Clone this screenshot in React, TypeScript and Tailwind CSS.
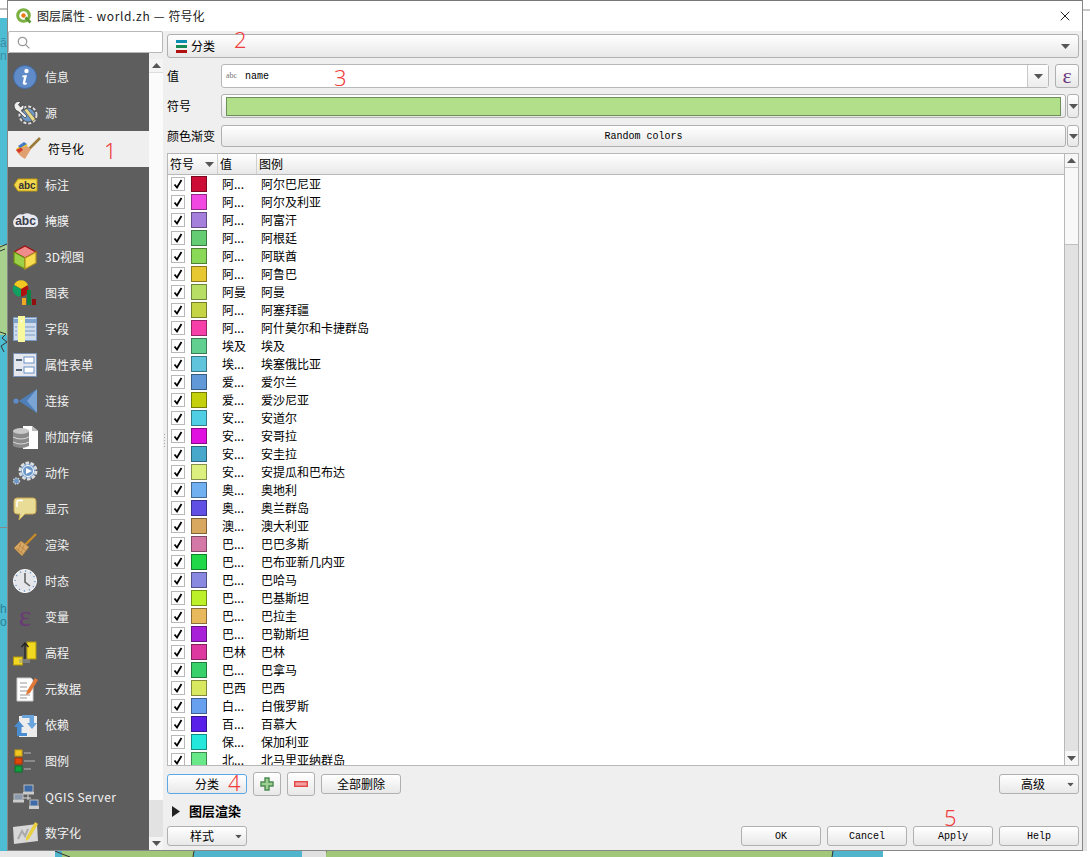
import type { ReactNode } from "react";
import { X } from "lucide-react";

const CJK = "font-['Noto_Sans_CJK_SC','Noto_Sans',sans-serif]";
const MONO = "font-['Liberation_Mono',monospace]";

const Caret = ({ up = false, className = "" }: { up?: boolean; className?: string }) => (
  <svg width="9" height="5" viewBox="0 0 9 5" className={className}>
    <path d={up ? "M0 5 L4.5 0 L9 5 Z" : "M0 0 L9 0 L4.5 5 Z"} fill="#555" />
  </svg>
);

const Btn = ({
  children,
  className = "",
}: {
  children?: ReactNode;
  className?: string;
}) => (
  <div
    className={`flex items-center justify-center rounded-[3px] border border-[#b0b0b0] bg-linear-to-b from-white to-[#e8e8e8] text-black ${className}`}
  >
    {children}
  </div>
);

const IconBox = ({ children }: { children: ReactNode }) => (
  <svg width="24" height="24" viewBox="0 0 24 24" className="shrink-0 overflow-visible">
    {children}
  </svg>
);

const ICONS: Record<string, ReactNode> = {
  info: (
    <IconBox>
      <circle cx="12" cy="12" r="11.5" fill="#5f8cc8" stroke="#3f6ba8" />
      <circle cx="13.5" cy="6" r="2.2" fill="#fff" />
      <path d="M9.5 10.5 L14 10 L12 18 L14 17.5 L13.5 19.5 Q9.5 20.5 9.7 18 L11 12.3 L9.3 12.3 Z" fill="#fff" />
    </IconBox>
  ),
  source: (
    <IconBox>
      <circle cx="15" cy="14" r="8.5" fill="#555" stroke="#ddd" strokeWidth="2" strokeDasharray="3 2" />
      <circle cx="15" cy="14" r="6.5" fill="#6c97c9" />
      <path d="M1 4 Q3 -1 8 1 L5.5 3.5 L7.5 6 L10.5 3.5 Q12 8 8 9.5 L14 15 L12 17 L6 11 Q1 9 1 4 Z" fill="#eee" stroke="#333" strokeWidth="0.7" />
      <path d="M11 9 L14 7.5 L22.5 18 L19.5 20.5 Z" fill="#e8d98a" stroke="#444" strokeWidth="0.6" />
    </IconBox>
  ),
  symbology: (
    <IconBox>
      <path d="M14 12 L25 1" stroke="#9a7a3a" strokeWidth="2.6" />
      <path d="M1 12 L9 6 L13 8 L4 15 Z" fill="#e8d020" />
      <path d="M1 13 L5 11 L12 9 L16 12 L10 22 Q4 19 1 13 Z" fill="#e0a070" />
      <path d="M1 13 L6 10.5 L8 13 L4 16 Z" fill="#d83a2a" />
      <path d="M3 9 L9 5 L12 7 L5 11 Z" fill="#4a78c8" />
    </IconBox>
  ),
  labels: (
    <IconBox>
      <path d="M1 12 L5 6 L24 6 L24 18 L5 18 Z" fill="#f2d84c" stroke="#c09a10" />
      <text x="14" y="15.5" textAnchor="middle" fontSize="10" fontWeight="700" fill="#333" fontFamily="Liberation Sans">abc</text>
    </IconBox>
  ),
  mask: (
    <IconBox>
      <path d="M2 18 Q-2 13 2 9 Q5 4 10 5.5 Q14 3 18 5.5 Q25 6 25 12 Q26 18 20 18 Z" fill="#e8e8f0" />
      <text x="12.5" y="16" textAnchor="middle" fontSize="12" fontWeight="700" fill="#3a3f4a" fontFamily="Liberation Sans">abc</text>
    </IconBox>
  ),
  view3d: (
    <IconBox>
      <path d="M1 7 L12 1 L23 7 L12 13 Z" fill="#f08c8c" stroke="#a01010" strokeWidth="1.2" />
      <path d="M1 7 L12 13 L12 24 L1 18 Z" fill="#9cd048" stroke="#6a9010" strokeWidth="1.2" />
      <path d="M23 7 L12 13 L12 24 L23 18 Z" fill="#f8dc50" stroke="#b09020" strokeWidth="1.2" />
    </IconBox>
  ),
  diagrams: (
    <IconBox>
      <circle cx="8" cy="8" r="7.5" fill="#b01010" />
      <path d="M8 8 L1 4 A7.5 7.5 0 0 1 15 4 Z" fill="#f0c820" />
      <path d="M8 8 L1 4 A7.5 7.5 0 0 0 8 15.5 Z" fill="#10a060" />
      <rect x="9" y="17" width="4" height="7" fill="#f0a820" />
      <rect x="14" y="9" width="4" height="15" fill="#108040" />
      <rect x="19" y="18" width="4" height="6" fill="#901010" />
    </IconBox>
  ),
  fields: (
    <IconBox>
      <rect x="0.5" y="0.5" width="23" height="23" fill="#cfdcec" stroke="#7a9cc4" />
      <rect x="1" y="2" width="22" height="4" fill="#7ea2cc" />
      <path d="M10 10 H22 M10 14 H22 M10 18 H22 M2 10 H4 M2 14 H4 M2 18 H4" stroke="#7a9cc4" strokeWidth="1.2" />
      <rect x="5" y="-1" width="7" height="26" fill="#f8f89c" />
      <circle cx="8.5" cy="4" r="1" fill="#fff" />
    </IconBox>
  ),
  form: (
    <IconBox>
      <rect x="0.5" y="0.5" width="23" height="23" fill="#e4e8ee" stroke="#7a94b8" />
      <rect x="11" y="4" width="10" height="6" fill="#fff" stroke="#6a90c8" />
      <rect x="11" y="14" width="10" height="6" fill="#fff" stroke="#6a90c8" />
      <path d="M3 7 H9 M3 17 H9" stroke="#55657a" strokeWidth="2" />
    </IconBox>
  ),
  joins: (
    <IconBox>
      <circle cx="3" cy="12" r="2.6" fill="#5f8cc8" />
      <path d="M6 12 L24 0 L24 24 Z" fill="#4f7fb8" />
      <path d="M14 12 L24 0 L24 24 Z" fill="#7aa4d4" />
    </IconBox>
  ),
  storage: (
    <IconBox>
      <path d="M10 1 L19 1 L25 6 L25 24 L10 24 Z" fill="#fff" />
      <path d="M19 1 L19 6 L25 6 Z" fill="#bbb" />
      <path d="M0 6 Q8 2 16 6 L16 21 Q8 25 0 21 Z" fill="#8a8a8a" />
      <ellipse cx="8" cy="6" rx="8" ry="3" fill="#c8c8c8" />
      <path d="M0 12 Q8 16 16 12 M0 17 Q8 21 16 17" stroke="#d8d8d8" fill="none" />
    </IconBox>
  ),
  actions: (
    <IconBox>
      <circle cx="15" cy="10" r="8" fill="#6c97c9" stroke="#ddd" strokeWidth="3" strokeDasharray="3.5 1.5" />
      <circle cx="15" cy="10" r="5.5" fill="#6c97c9" stroke="#fff" />
      <path d="M13 7 L19 10 L13 13 Z" fill="#fff" />
      <circle cx="3.5" cy="20" r="3" fill="#6c97c9" stroke="#ccc" strokeWidth="1.4" strokeDasharray="1.5 1" />
    </IconBox>
  ),
  display: (
    <IconBox>
      <path d="M4 1 H20 Q23 1 23 4 V14 Q23 17 20 17 H12 L6 23 L7 17 H4 Q1 17 1 14 V4 Q1 1 4 1 Z" fill="#e8dc96" stroke="#c8a850" />
      <path d="M4 10 V5 Q4 3.5 6 3.5 H10" stroke="#fff" strokeWidth="1.5" fill="none" />
    </IconBox>
  ),
  rendering: (
    <IconBox>
      <path d="M11 13 L23 1" stroke="#c88a28" strokeWidth="2.4" />
      <path d="M1 15 L8 8 L16 14 L9 23 Z" fill="#d8a868" stroke="#a87830" strokeWidth="0.6" />
      <path d="M3 15 L10 21 M6 12 L13 18 M8 10 L5 18 M11 12 L8 20" stroke="#a87830" strokeWidth="0.6" />
    </IconBox>
  ),
  temporal: (
    <IconBox>
      <circle cx="12" cy="12" r="11.5" fill="#e4e6ea" stroke="#fff" />
      <circle cx="12" cy="12" r="10" fill="none" stroke="#6c97c9" strokeWidth="1.4" strokeDasharray="1.2 4" />
      <path d="M12 4 V13 L17 17" stroke="#666" strokeWidth="1.6" fill="none" />
    </IconBox>
  ),
  variables: (
    <IconBox>
      <text x="12" y="21" textAnchor="middle" fontSize="30" fill="#6a3a76" fontFamily="Liberation Serif">ε</text>
    </IconBox>
  ),
  elevation: (
    <IconBox>
      <rect x="14" y="1" width="9" height="17" fill="#f2d820" stroke="#b09810" />
      <rect x="0.5" y="16" width="9" height="8" fill="#f2d820" stroke="#b09810" />
      <path d="M12 18 V2 M8.5 6 L12 2 L15.5 6" stroke="#222" strokeWidth="1.3" fill="none" />
      <path d="M6 19 H17 M6 21 H17" stroke="#999" />
    </IconBox>
  ),
  metadata: (
    <IconBox>
      <path d="M4 1 H18 L20 3 V24 H4 Z" fill="#fff" stroke="#ccc" />
      <path d="M7 6 H14 M7 10 H14 M7 14 H17 M7 18 H17 M7 21 H14" stroke="#999" />
      <path d="M14 14 L22 1 L25 3 L17 16 L13 18 Z" fill="#e07838" />
    </IconBox>
  ),
  dependencies: (
    <IconBox>
      <rect x="6" y="3" width="18" height="21" fill="#ececec" />
      <path d="M1 14 L6 8 L11 14 L8.5 14 V20 H14 V23 H4 V14 Z" fill="#4a8cd0" />
      <path d="M24 10 L19 16 L14 10 L16.5 10 V5 H9 V2 H21 V10 Z" fill="#6aa4dc" />
    </IconBox>
  ),
  legend: (
    <IconBox>
      <rect x="2" y="1" width="7" height="6" fill="#f0c820" stroke="#c8a010" />
      <rect x="2" y="9" width="7" height="6" fill="#e04808" stroke="#b03000" />
      <rect x="2" y="17" width="7" height="6" fill="#10a040" stroke="#087028" />
      <path d="M11 4 H18 M11 12 H22 M11 20 H18" stroke="#999" strokeWidth="1.6" />
    </IconBox>
  ),
  server: (
    <IconBox>
      <rect x="11" y="0" width="9" height="7" fill="#3d6aa8" stroke="#bbb" />
      <rect x="10" y="7" width="11" height="2.5" fill="#ccc" />
      <rect x="1" y="9" width="9" height="6" fill="#8a99ac" stroke="#bbb" />
      <rect x="0" y="15" width="11" height="2.5" fill="#ccc" />
      <rect x="17" y="15" width="8" height="6" fill="#3d6aa8" stroke="#bbb" />
      <rect x="16" y="21" width="10" height="3" fill="#ccc" />
      <path d="M15 9.5 V15 M10 13 H18" stroke="#ddd" />
    </IconBox>
  ),
  digitizing: (
    <IconBox>
      <path d="M0 6 L24 3 L25 20 L1 23 Z" fill="#d8d8d8" />
      <path d="M5 18 L9 10 L12 15 L15 8" stroke="#aaa" strokeWidth="2" fill="none" />
      <path d="M13 17 L22 1 L25 3 L16 18 L13 20 Z" fill="#e8d040" />
    </IconBox>
  ),
};

const NAV = [
  { id: "info", label: "信息" },
  { id: "source", label: "源" },
  { id: "symbology", label: "符号化" },
  { id: "labels", label: "标注" },
  { id: "mask", label: "掩膜" },
  { id: "view3d", label: "3D视图" },
  { id: "diagrams", label: "图表" },
  { id: "fields", label: "字段" },
  { id: "form", label: "属性表单" },
  { id: "joins", label: "连接" },
  { id: "storage", label: "附加存储" },
  { id: "actions", label: "动作" },
  { id: "display", label: "显示" },
  { id: "rendering", label: "渲染" },
  { id: "temporal", label: "时态" },
  { id: "variables", label: "变量" },
  { id: "elevation", label: "高程" },
  { id: "metadata", label: "元数据" },
  { id: "dependencies", label: "依赖" },
  { id: "legend", label: "图例" },
  { id: "server", label: "QGIS Server" },
  { id: "digitizing", label: "数字化" },
];

const ROWS = [
  { value: "阿...", legend: "阿尔巴尼亚", color: "bg-[#cc0e36]" },
  { value: "阿...", legend: "阿尔及利亚", color: "bg-[#f048e0]" },
  { value: "阿...", legend: "阿富汗", color: "bg-[#a57fdc]" },
  { value: "阿...", legend: "阿根廷", color: "bg-[#64cc72]" },
  { value: "阿...", legend: "阿联酋", color: "bg-[#8ad858]" },
  { value: "阿...", legend: "阿鲁巴", color: "bg-[#e8c832]" },
  { value: "阿曼", legend: "阿曼", color: "bg-[#b8de66]" },
  { value: "阿...", legend: "阿塞拜疆", color: "bg-[#c4d444]" },
  { value: "阿...", legend: "阿什莫尔和卡捷群岛", color: "bg-[#f440a8]" },
  { value: "埃及", legend: "埃及", color: "bg-[#60cf90]" },
  { value: "埃...", legend: "埃塞俄比亚", color: "bg-[#60c4dc]" },
  { value: "爱...", legend: "爱尔兰", color: "bg-[#6098d8]" },
  { value: "爱...", legend: "爱沙尼亚", color: "bg-[#c4d00c]" },
  { value: "安...", legend: "安道尔", color: "bg-[#50cfe4]" },
  { value: "安...", legend: "安哥拉", color: "bg-[#e010e0]" },
  { value: "安...", legend: "安圭拉", color: "bg-[#48a8cc]" },
  { value: "安...", legend: "安提瓜和巴布达", color: "bg-[#dcf080]" },
  { value: "奥...", legend: "奥地利", color: "bg-[#70b0f0]" },
  { value: "奥...", legend: "奥兰群岛", color: "bg-[#6050e4]" },
  { value: "澳...", legend: "澳大利亚", color: "bg-[#d8a860]" },
  { value: "巴...", legend: "巴巴多斯", color: "bg-[#d478a8]" },
  { value: "巴...", legend: "巴布亚新几内亚", color: "bg-[#20d848]" },
  { value: "巴...", legend: "巴哈马", color: "bg-[#8888e0]" },
  { value: "巴...", legend: "巴基斯坦", color: "bg-[#bcf028]" },
  { value: "巴...", legend: "巴拉圭", color: "bg-[#e8b85c]" },
  { value: "巴...", legend: "巴勒斯坦", color: "bg-[#a820d8]" },
  { value: "巴林", legend: "巴林", color: "bg-[#dc38a0]" },
  { value: "巴...", legend: "巴拿马", color: "bg-[#38d068]" },
  { value: "巴西", legend: "巴西", color: "bg-[#d8e860]" },
  { value: "白...", legend: "白俄罗斯", color: "bg-[#68a0f0]" },
  { value: "百...", legend: "百慕大", color: "bg-[#5820e8]" },
  { value: "保...", legend: "保加利亚", color: "bg-[#24e8dc]" },
  { value: "北...", legend: "北马里亚纳群岛", color: "bg-[#68e888]" },
];

const NOTES = [
  { text: "1", className: "left-[104px] top-[136px]" },
  { text: "2", className: "left-[234px] top-[25px]" },
  { text: "3", className: "left-[334px] top-[63px]" },
  { text: "4", className: "left-[228px] top-[768px]" },
  { text: "5", className: "left-[944px] top-[803px]" },
];

// what shows of the map behind the dialog
const MapBehind = () => (
  <svg width="1090" height="857" viewBox="0 0 1090 857" className="absolute inset-0">
    <rect width="1090" height="857" fill="#fff" />
    <rect x="0" y="8" width="7" height="2" fill="#c0c0c0" />
    <rect x="0" y="18" width="7" height="839" fill="#4dbdd3" />
    <rect x="0" y="245" width="7" height="90" fill="#a9d18e" />
    <path d="M0 247 L7 244 M0 251 L5 249 M0 332 L6 334 L2 338 L7 342 L1 346 L4 352" stroke="#333" fill="none" />
    <rect x="0" y="527" width="7" height="1" fill="#888" />
    <text x="0" y="47" fontSize="12" fill="#3c8ea6" fontFamily="Liberation Sans">ã</text>
    <text x="0" y="60" fontSize="12" fill="#3c8ea6" fontFamily="Liberation Sans">n</text>
    <text x="0" y="613" fontSize="12" fill="#2c7f96" fontFamily="Liberation Sans">h</text>
    <text x="0" y="626" fontSize="12" fill="#2c7f96" fontFamily="Liberation Sans">o</text>
    <rect x="0" y="851" width="883" height="6" fill="#4fb4cc" />
    <rect x="0" y="851" width="55" height="6" fill="#e8e8e8" />
    <rect x="62" y="851" width="132" height="6" fill="#a0c878" />
    <rect x="326" y="851" width="506" height="6" fill="#a0c878" />
    <path d="M833 851 L832 857 M194 851 L193 857 M326 851 L325 857 M55 851 L62 854 L70 857" stroke="#333" fill="none" />
    <rect x="302" y="851" width="24" height="6" fill="#e0e0e0" />
    <rect x="1083" y="0" width="7" height="857" fill="#fff" />
    <rect x="1083" y="9" width="7" height="2" fill="#c8c8c8" />
    <rect x="1083" y="40" width="4" height="811" fill="#e4e4e4" />
  </svg>
);

const Sidebar = () => (
  <div className="flex w-[155px] shrink-0 flex-col">
    <div className="flex h-[22px] items-center rounded-[2px] border border-[#b8b8b8] bg-white pl-[8px]">
      <svg width="13" height="13" viewBox="0 0 13 13" fill="none" stroke="#999" strokeWidth="1.3">
        <circle cx="5.5" cy="5.5" r="4.2" />
        <path d="M8.6 8.6 L12.4 12.4" />
      </svg>
    </div>
    <div className="flex min-h-0 flex-1">
      <div className="w-[141px] overflow-hidden bg-[#5e5e5e] pt-[6px]">
        {NAV.map((item) => {
          const active = item.id === "symbology";
          return (
            <div
              key={item.id}
              className={`flex h-[36px] items-center text-[12px] ${
                active
                  ? "gap-[9px] bg-[#efefef] pl-[7px] text-black"
                  : "gap-[8px] pl-[5px] text-[#f2f2f2]"
              }`}
            >
              {ICONS[item.id]}
              <span className={item.id === "server" ? "tracking-[0.4px]" : ""}>{item.label}</span>
            </div>
          );
        })}
      </div>
      <div className="flex w-[14px] flex-col bg-[#efefef] pt-[6px]">
        <div className="flex h-[14px] items-center justify-center border-b border-[#ddd] bg-[#f4f4f4]">
          <Caret up />
        </div>
        <div className="h-[727px] bg-[#fbfbfb]" />
        <div className="flex-1 bg-[#e2e2e2]" />
        <div className="flex h-[13px] items-center justify-center bg-[#f4f4f4]">
          <Caret />
        </div>
      </div>
    </div>
  </div>
);

const Splitter = () => (
  <div className="flex w-[4px] shrink-0 flex-col items-center justify-center gap-[2px] pr-[1px]">
    {[0, 1, 2, 3, 4].map((dot) => (
      <div key={dot} className="h-[1px] w-[1px] bg-[#aaa]" />
    ))}
  </div>
);

const Check = () => (
  <div className="flex h-[14px] w-[14px] items-center justify-center border border-[#b8b8b8] bg-white">
    <svg width="10" height="10" viewBox="0 0 10 10" fill="none" stroke="#000" strokeWidth="1.8">
      <path d="M1.5 5.5 L4 8.5 L8.5 1" />
    </svg>
  </div>
);

const CategoryTable = () => (
  <div className="mt-[6px] flex h-[613px] border border-[#b8b8b8] bg-white">
    <div className="flex min-w-0 flex-1 flex-col overflow-hidden">
      <div className="flex h-[21px] shrink-0 border-b border-[#b8b8b8] bg-linear-to-b from-white to-[#e8e8e8] text-[12px] text-black">
        <div className="flex w-[50px] items-center justify-between border-r border-[#d0d0d0] pr-[3px] pl-[2px]">
          符号
          <Caret />
        </div>
        <div className="flex w-[39px] items-center border-r border-[#d0d0d0] pl-[2px]">值</div>
        <div className="flex flex-1 items-center pl-[2px]">图例</div>
      </div>
      {ROWS.map((row) => (
        <div key={row.legend} className="flex h-[18px] shrink-0 items-center text-[12px] text-black">
          <div className="ml-[3px] flex w-[47px] items-center">
            <Check />
            <div className={`ml-[6px] h-[16px] w-[16px] border border-black/40 ${row.color}`} />
          </div>
          <span className="w-[39px] pl-[4px]">{row.value}</span>
          <span className="pl-[4px]">{row.legend}</span>
        </div>
      ))}
    </div>
    <div className="flex w-[14px] shrink-0 flex-col border-l border-[#b8b8b8]">
      <div className="flex h-[14px] items-center justify-center border-b border-[#c8c8c8] bg-[#f6f6f6]">
        <Caret up />
      </div>
      <div className="h-[77px] border-b border-[#c0c0c0] bg-[#f8f8f8]" />
      <div className="flex-1 bg-[#e2e2e2]" />
      <div className="flex h-[14px] items-center justify-center bg-[#f6f6f6]">
        <Caret />
      </div>
    </div>
  </div>
);

const Main = () => (
  <div className="flex w-[912px] shrink-0 flex-col pt-[3px] text-[12px]">
    <Btn className="h-[24px] justify-between! pr-[8px] pl-[8px]">
      <span className="flex items-center gap-[3px]">
        <svg width="12" height="13" viewBox="0 0 12 13">
          <rect x="0" y="0" width="11" height="3" fill="#0a8fb0" />
          <rect x="0" y="5" width="11" height="3" fill="#168a55" />
          <rect x="0" y="10" width="11" height="3" fill="#b01010" />
        </svg>
        分类
      </span>
      <Caret />
    </Btn>

    <div className="mt-[6px] flex h-[24px] items-center">
      <span className="w-[54px]">值</span>
      <div className="flex h-full w-[828px] items-center rounded-[3px] border border-[#b8b8b8] bg-white">
        <span className="ml-[4px] w-[19px] font-['Liberation_Serif',serif] text-[8px] text-[#777]">abc</span>
        <span className={`${MONO} flex-1 text-[10px]`}>name</span>
        <div className="flex h-full w-[21px] items-center justify-center border-l border-[#c8c8c8] bg-linear-to-b from-white to-[#ececec]">
          <Caret />
        </div>
      </div>
      <Btn className="ml-[6px] h-full w-[24px] font-['Liberation_Serif',serif] text-[22px] leading-[20px] text-[#6b3a7d]!">ε</Btn>
    </div>

    <div className="mt-[6px] flex h-[24px] items-center">
      <span className="w-[54px]">符号</span>
      <Btn className="h-full w-[845px] px-[4px]">
        <div className="h-[19px] w-full border border-[#6e8f5c] bg-[#b2df8a]" />
      </Btn>
      <Btn className="ml-[1px] h-full w-[12px]">
        <Caret />
      </Btn>
    </div>

    <div className="mt-[7px] flex h-[22px] items-center">
      <span className="w-[54px]">颜色渐变</span>
      <Btn className={`${MONO} h-full w-[845px] text-[10px]`}>Random colors</Btn>
      <Btn className="ml-[1px] h-full w-[12px]">
        <Caret />
      </Btn>
    </div>

    <CategoryTable />

    <div className="mt-[6px] flex h-[24px] items-center">
      <Btn className="h-[20px] w-[80px] border-[#5aa9e6]!">分类</Btn>
      <Btn className="ml-[6px] h-[24px] w-[28px]">
        <svg width="14" height="14" viewBox="0 0 14 14">
          <path d="M5 1 H9 V5 H13 V9 H9 V13 H5 V9 H1 V5 H5 Z" fill="#9ecf92" stroke="#4b8a4f" strokeWidth="1.4" />
        </svg>
      </Btn>
      <Btn className="ml-[6px] h-[24px] w-[28px]">
        <svg width="14" height="6" viewBox="0 0 14 6">
          <rect x="0.7" y="0.7" width="12.6" height="4.6" fill="#f4a0a0" stroke="#e04848" strokeWidth="1.4" />
        </svg>
      </Btn>
      <Btn className="ml-[6px] h-[20px] w-[80px]">全部删除</Btn>
      <Btn className="relative ml-auto h-[20px] w-[80px] pr-[12px]">
        高级
        <Caret className="absolute right-[3px] scale-75" />
      </Btn>
    </div>

    <div className="mt-[7px] flex h-[16px] items-center pl-[5px]">
      <svg width="8" height="11" viewBox="0 0 8 11">
        <path d="M0 0 L8 5.5 L0 11 Z" fill="#222" />
      </svg>
      <span className="ml-[9px] text-[13px] font-bold">图层渲染</span>
    </div>

    <div className="mt-[7px] flex h-[20px] items-center">
      <Btn className="relative h-full w-[80px] pr-[10px]">
        样式
        <Caret className="absolute right-[3px] scale-75" />
      </Btn>
      <div className={`${MONO} ml-auto flex h-full gap-[6px] text-[10px]`}>
        {["OK", "Cancel", "Apply", "Help"].map((label) => (
          <Btn key={label} className="h-full w-[80px]">
            {label}
          </Btn>
        ))}
      </div>
    </div>
  </div>
);

export default function App() {
  return (
    <div className={`${CJK} relative h-[857px] w-[1090px] overflow-hidden`}>
      <MapBehind />
      <div className="relative ml-[7px] flex h-[851px] w-[1076px] flex-col border border-t-[#777] border-r-[#888] border-b-[#888] border-l-[#888] bg-[#efefef]">
        <div className="flex h-[30px] shrink-0 items-center bg-white pr-[9px] pl-[8px] text-[12px] text-[#222]">
          <svg width="16" height="16" viewBox="0 0 16 16" fill="none">
            <circle cx="7.5" cy="7.5" r="5.8" stroke="#79b040" strokeWidth="3" />
            <circle cx="7.5" cy="7.5" r="2.2" fill="#ee7913" />
            <path d="M9.5 9.5 L14.5 14.5" stroke="#5a9632" strokeWidth="2.6" />
          </svg>
          <span className="ml-[5px]">
            图层属性<span className="tracking-[0.65px]"> - world.zh — </span>符号化
          </span>
          <X size={16} strokeWidth={1.4} color="#111" className="ml-auto" />
        </div>
        <div className="flex min-h-0 flex-1">
          <Sidebar />
          <Splitter />
          <Main />
        </div>
      </div>
      {NOTES.map((note) => (
        <span
          key={note.text}
          className={`absolute font-['Noto_Sans',sans-serif] text-[22px] leading-[28px] font-light text-[#f03c3c] ${note.className}`}
        >
          {note.text}
        </span>
      ))}
    </div>
  );
}
